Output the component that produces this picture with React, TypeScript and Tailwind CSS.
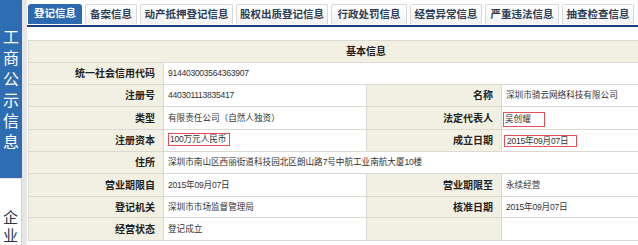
import React from 'react';

const tabs = [
  { label: '登记信息', w: 'w-[54px]', active: true },
  { label: '备案信息', w: 'w-[52px]' },
  { label: '动产抵押登记信息', w: 'w-[93px]' },
  { label: '股权出质登记信息', w: 'w-[92px]' },
  { label: '行政处罚信息', w: 'w-[76px]' },
  { label: '经营异常信息', w: 'w-[72px]' },
  { label: '严重违法信息', w: 'w-[74px]' },
  { label: '抽查检查信息', w: 'w-[72px]' },
];

// digit runs are narrower in the reference, so tighten them a bit
function fmt(s: string) {
  return s.split(/(\d+)/).map((p, i) =>
    /^\d+$/.test(p) ? (
      <span key={i} className="tracking-[-0.3px]">
        {p}
      </span>
    ) : (
      p
    )
  );
}

function Label({ children }: { children?: React.ReactNode }) {
  return (
    <div className="bg-[#f1f0e3] border-r border-b border-[#dcdad0] flex items-center justify-end pr-[8px] text-[10px] font-bold text-[#222]">
      {children}
    </div>
  );
}

function Value({ children, span }: { children?: React.ReactNode; span?: boolean }) {
  return (
    <div
      className={
        span
          ? 'col-span-3 bg-white border-r border-b border-[#dcdad0] flex items-center pl-[4px] text-[8.6px] text-[#333] whitespace-nowrap'
          : 'bg-white border-r border-b border-[#dcdad0] flex items-center pl-[4px] text-[8.6px] text-[#333] whitespace-nowrap'
      }
    >
      {children}
    </div>
  );
}

function Row({ h, children }: { h: string; children: React.ReactNode }) {
  return <div className={`grid grid-cols-[135px_203px_135px_203px] ${h}`}>{children}</div>;
}

export default function App() {
  const side = ['工', '商', '公', '示', '信', '息'];

  return (
    <div className="w-[638px] h-[245px] overflow-hidden flex bg-white font-['Liberation_Sans','Noto_Sans_CJK_SC',sans-serif]">
      {/* Left sidebar */}
      <div className="w-[22px] shrink-0 flex flex-col bg-[#e6e6e6]">
        <div className="h-[186px] bg-[#2f6db3] pt-[27px] flex flex-col items-center text-white text-[16px] leading-[21px]">
          {side.map((c) => (
            <div key={c}>{c}</div>
          ))}
        </div>
        <div className="flex-1 mt-[1px] bg-white border-r border-[#d2d2d2] pt-[30px] flex flex-col items-center text-[#24344a] text-[15px] leading-[18px]">
          <div>企</div>
          <div>业</div>
        </div>
      </div>
      <div className="w-[5px] shrink-0 bg-[#e6e6e6]" />

      {/* Content */}
      <div className="flex-1 min-w-0 pt-[4px]">
        <div className="flex gap-[3px] pl-[1px] h-[21px]">
          {tabs.map((t) =>
            t.active ? (
              <div
                key={t.label}
                className={`${t.w} h-[20px] rounded-t-[3px] bg-[#2b69b0] text-white text-[10.5px] font-bold flex items-center justify-center`}
              >
                {t.label}
              </div>
            ) : (
              <div
                key={t.label}
                className={`${t.w} h-[20px] rounded-t-[2px] border border-b-0 border-[#d8d8d8] bg-gradient-to-b from-white to-[#f2f2f2] text-[#2c3d56] text-[10.5px] font-bold flex items-center justify-center whitespace-nowrap`}
              >
                {t.label}
              </div>
            )
          )}
        </div>
        <div className="h-[2px] bg-[#1b3d7a]" />

        {/* Basic info table */}
        <div className="mt-[13px] ml-[1px] w-[676px] border-l border-t border-[#dcdad0]">
          <div className="h-[22px] bg-[#f1f0e3] border-r border-b border-[#dcdad0] flex items-center justify-center text-[10px] font-bold text-[#222]">
            基本信息
          </div>
          <Row h="h-[22px]">
            <Label>统一社会信用代码</Label>
            <Value span>{fmt('914403003564363907')}</Value>
          </Row>
          <Row h="h-[22px]">
            <Label>注册号</Label>
            <Value>{fmt('440301113835417')}</Value>
            <Label>名称</Label>
            <Value>深圳市骑云网络科技有限公司</Value>
          </Row>
          <Row h="h-[23px]">
            <Label>类型</Label>
            <Value>有限责任公司（自然人独资）</Value>
            <Label>法定代表人</Label>
            <Value>
              <span className="-ml-[3px] mt-[3px] w-[42px] h-[15px] border border-[#e4505a] flex items-center pl-[1px]">
                吴创耀
              </span>
            </Value>
          </Row>
          <Row h="h-[22px]">
            <Label>注册资本</Label>
            <Value>
              <span className="w-[62px] h-[13px] -mt-[2px] border border-[#e4505a] flex items-center pl-[1px]">
                {fmt('100万元人民币')}
              </span>
            </Value>
            <Label>成立日期</Label>
            <Value>
              <span className="-ml-[2px] mt-[1px] w-[73px] h-[12px] border border-[#e4505a] flex items-center pl-[2px]">
                {fmt('2015年09月07日')}
              </span>
            </Value>
          </Row>
          <Row h="h-[22px]">
            <Label>住所</Label>
            <Value span>{fmt('深圳市南山区西丽街道科技园北区朗山路7号中航工业南航大厦10楼')}</Value>
          </Row>
          <Row h="h-[23px]">
            <Label>营业期限自</Label>
            <Value>{fmt('2015年09月07日')}</Value>
            <Label>营业期限至</Label>
            <Value>永续经营</Value>
          </Row>
          <Row h="h-[21px]">
            <Label>登记机关</Label>
            <Value>深圳市市场监督管理局</Value>
            <Label>核准日期</Label>
            <Value>{fmt('2015年09月07日')}</Value>
          </Row>
          <Row h="h-[23px]">
            <Label>经营状态</Label>
            <Value>登记成立</Value>
            <Label />
            <Value />
          </Row>
        </div>
      </div>
    </div>
  );
}
